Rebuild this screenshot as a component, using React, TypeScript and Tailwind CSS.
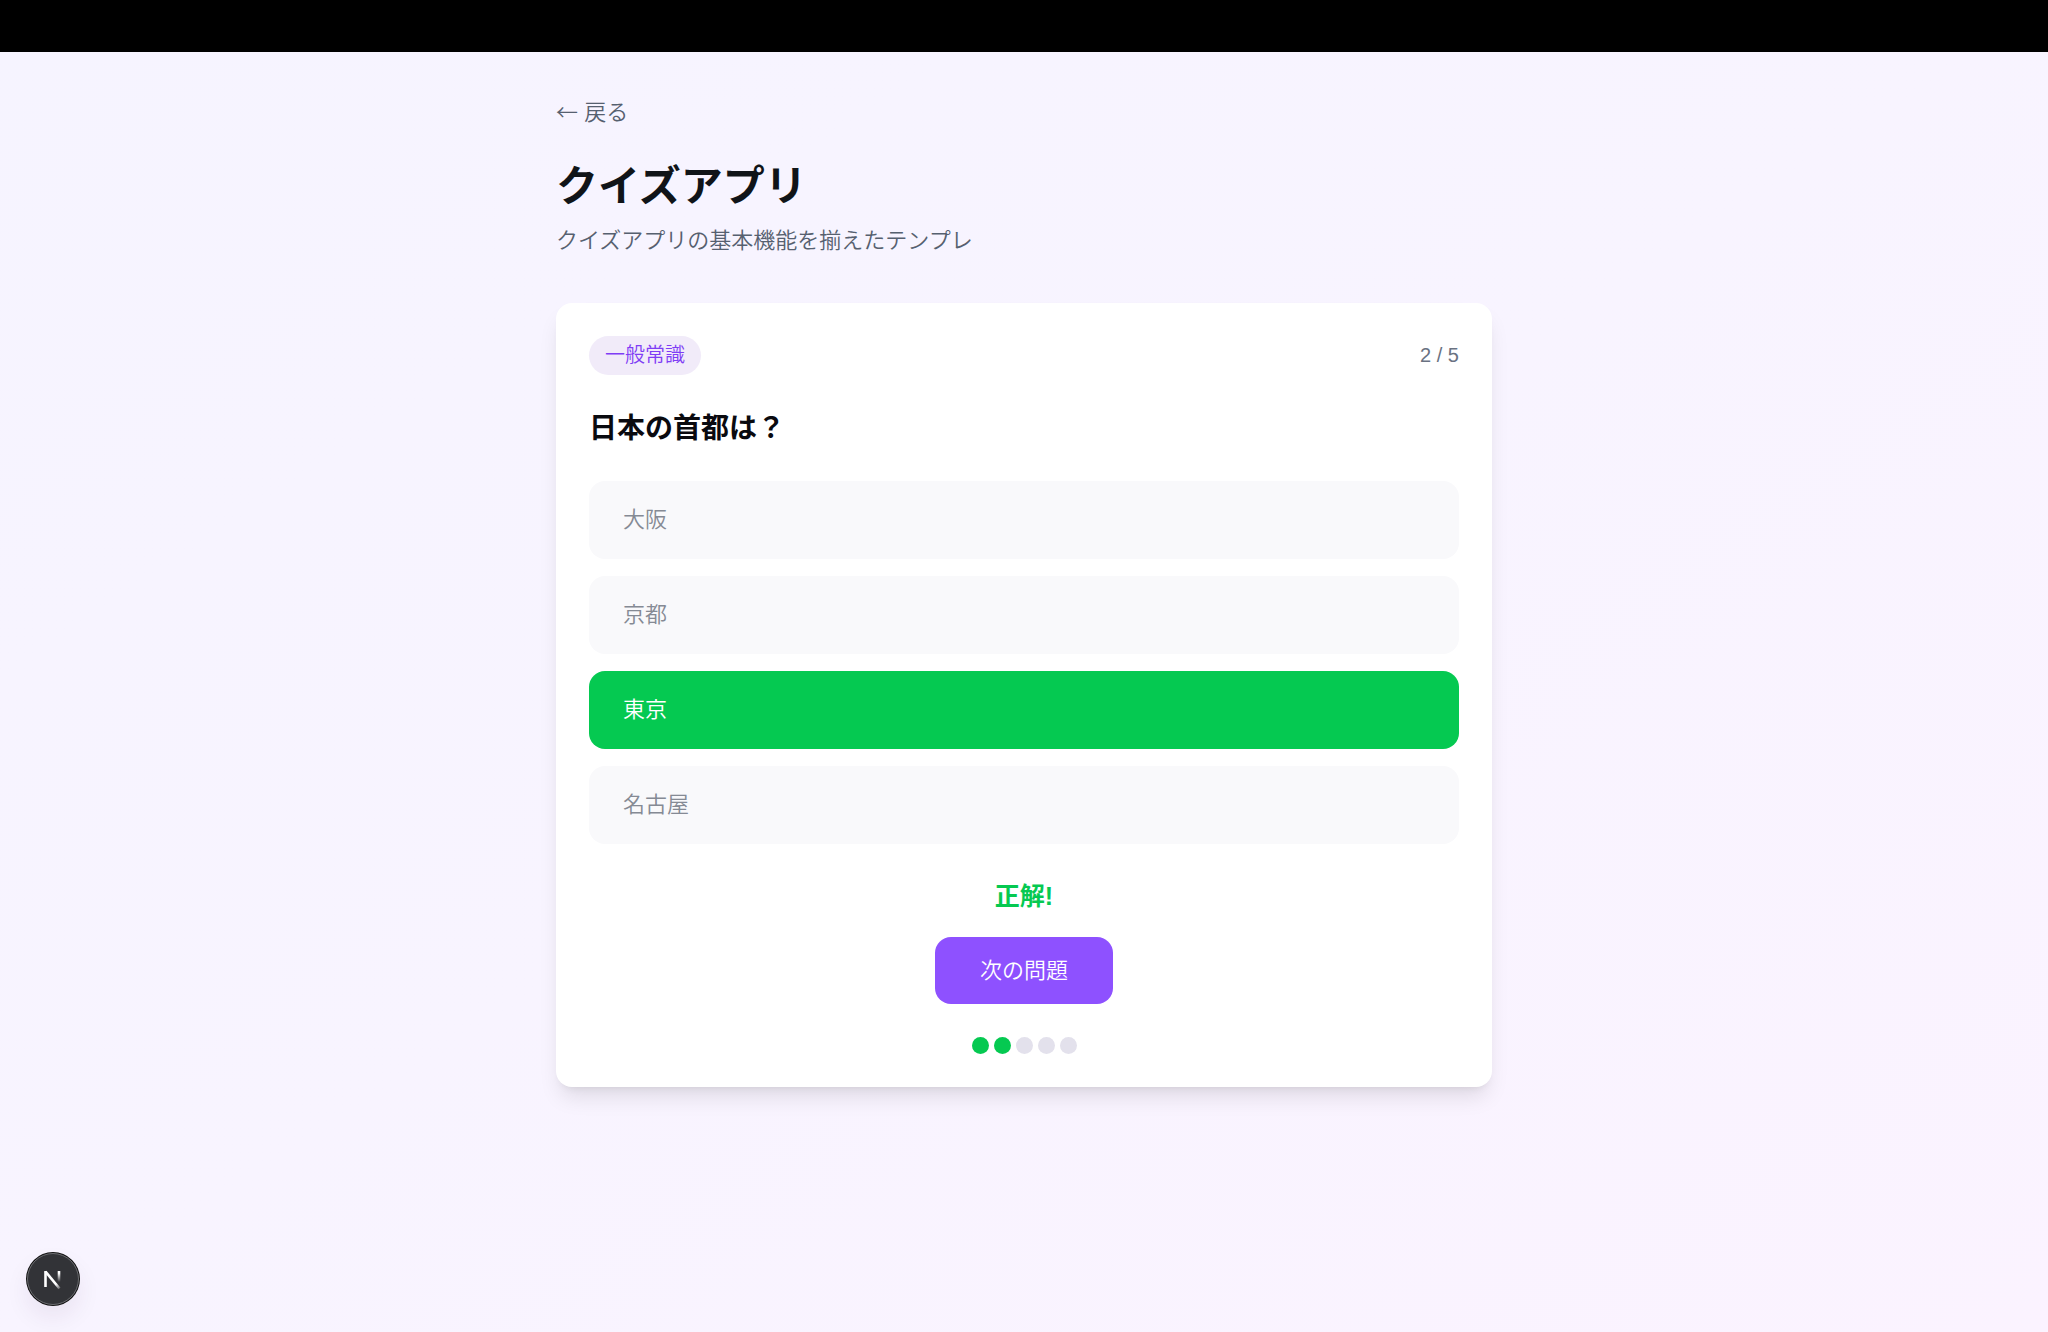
import React from "react";

type Option = { label: string; correct: boolean };

const options: Option[] = [
  { label: "大阪", correct: false },
  { label: "京都", correct: false },
  { label: "東京", correct: true },
  { label: "名古屋", correct: false },
];

const progress = [true, true, false, false, false];

function OptionButton({ label, correct }: Option) {
  return (
    <button
      type="button"
      className={
        correct
          ? "w-full rounded-2xl bg-[#05c951] px-[34px] py-[22px] text-left text-[22px] leading-[34px] text-white"
          : "w-full rounded-2xl bg-[#f9f9fb] px-[34px] py-[22px] text-left text-[22px] leading-[34px] text-[#858a94]"
      }
    >
      {label}
    </button>
  );
}

function DevBadge() {
  return (
    <button
      type="button"
      aria-label="開発ツール"
      className="fixed bottom-[27px] left-[27px] flex size-[52px] items-center justify-center rounded-full border border-[#6b6c70] bg-[#323337] shadow-[0_0_0_1px_#111,0_12px_24px_rgba(60,20,80,0.08)]"
    >
      <svg width="22" height="22" viewBox="0 0 22 22" fill="none" aria-hidden="true">
        <defs>
          <linearGradient id="diagonal" x1="9" y1="9" x2="19" y2="21" gradientUnits="userSpaceOnUse">
            <stop offset="0.55" stopColor="#fff" />
            <stop offset="1" stopColor="#fff" stopOpacity="0.1" />
          </linearGradient>
          <linearGradient id="stem" x1="17" y1="3" x2="17" y2="14" gradientUnits="userSpaceOnUse">
            <stop offset="0.2" stopColor="#fff" />
            <stop offset="1" stopColor="#fff" stopOpacity="0" />
          </linearGradient>
        </defs>
        <path d="M3.5 19V3" stroke="#fff" strokeWidth="2.6" />
        <path d="M3.5 3.6L17.5 20.5" stroke="url(#diagonal)" strokeWidth="2.6" />
        <path d="M17 3V14" stroke="url(#stem)" strokeWidth="2.6" />
      </svg>
    </button>
  );
}

export default function App() {
  return (
    <div className="flex min-h-screen flex-col bg-linear-to-br from-[#f6f4ff] via-[#f8f4ff] to-[#fbf3ff] font-['Liberation_Sans','Noto_Sans_CJK_JP',sans-serif] font-[350]">
      <header className="h-[52px] bg-black" />
      <main className="mx-auto w-full max-w-[936px] pt-[44px]">
        <a href="#" className="block text-[22px] leading-[34px] text-[#56606f]">
          <span className="font-['Noto_Sans_CJK_JP',sans-serif] leading-none">←</span> 戻る
        </a>
        <h1 className="mt-8 text-[42px] leading-[50px] font-bold text-[#101418]">クイズアプリ</h1>
        <p className="mt-3 text-[22px] leading-[34px] text-[#56606f]">クイズアプリの基本機能を揃えたテンプレ</p>

        <section className="mt-[45px] rounded-2xl bg-white p-[33px] shadow-[0_14px_21px_-4px_rgba(0,0,0,0.1),0_6px_8px_-6px_rgba(0,0,0,0.1)]">
          <div className="flex items-center justify-between text-[20px]">
            <span className="rounded-full bg-[#f1ebf9] px-4 py-[5px] leading-[29px] text-[#7f3df5]">一般常識</span>
            <span className="leading-[29px] text-[#6a7282]">2 / 5</span>
          </div>
          <h2 className="mt-[34px] text-[28px] leading-[40px] font-bold text-[#0a0a0f]">日本の首都は？</h2>
          <div className="mt-8 flex flex-col gap-[17px]">
            {options.map((option) => (
              <OptionButton key={option.label} {...option} />
            ))}
          </div>
          <div className="mt-[33px] flex flex-col items-center">
            <p className="text-[25px] leading-[38px] font-bold text-[#05c951]">正解!</p>
            <button
              type="button"
              className="mt-[22px] rounded-2xl bg-[#8e51ff] px-[45px] py-4 text-[22px] leading-[35px] text-white"
            >
              次の問題
            </button>
          </div>
          <div className="mt-[33px] flex justify-center gap-[5px]">
            {progress.map((done, i) => (
              <span
                key={i}
                className={done ? "size-[17px] rounded-full bg-[#05c951]" : "size-[17px] rounded-full bg-[#e3e1ec]"}
              />
            ))}
          </div>
        </section>
      </main>
      <DevBadge />
    </div>
  );
}
